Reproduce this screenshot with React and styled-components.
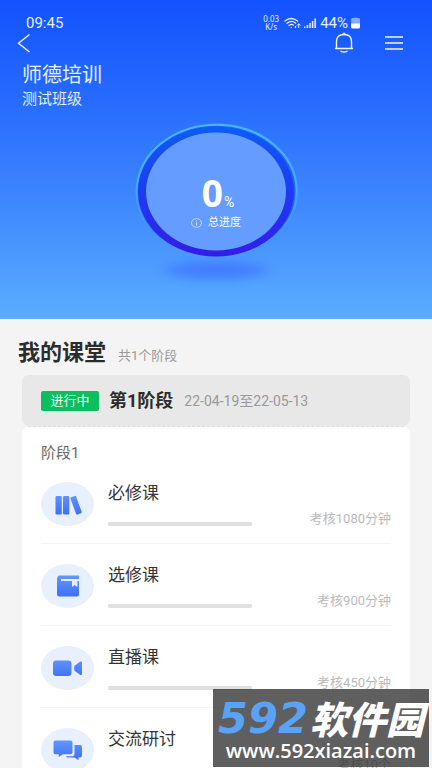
import React from "react";
import styled, { createGlobalStyle, css } from "styled-components";

const GlobalStyle = createGlobalStyle`
  *, *::before, *::after { box-sizing: border-box; }
  body {
    margin: 0;
    background: #f4f4f4;
    color: #333;
    font-family: Roboto, "Noto Sans CJK SC", sans-serif;
  }
  h1, h2, h3, p, ul { margin: 0; padding: 0; font-weight: 400; }
  button { margin: 0; padding: 0; border: 0; background: none; color: inherit; font: inherit; }
  svg { display: block; }
`;

const Screen = styled.div`
  position: relative;
  height: 100vh;
  overflow: hidden;
  background: #f4f4f4;
`;

const Scroller = styled.div`
  height: 100%;
  overflow-y: auto;
  scrollbar-width: none;
`;

const Hero = styled.header`
  padding: 15px 0 28px;
  color: #fff;
  background: linear-gradient(#1352ff 0%, #256aff 30%, #3f89ff 65%, #5aadff 100%);
`;

const StatusBar = styled.div`
  display: flex;
  align-items: center;
  justify-content: space-between;
  height: 16px;
  padding: 0 72px 0 26px;
  font-size: 15px;
  line-height: 16px;
  color: #e4efff;
`;

const StatusIcons = styled.div`
  display: flex;
  align-items: center;
  gap: 3px;
`;

const NetSpeed = styled.span`
  display: flex;
  flex-direction: column;
  margin-right: 2px;
  font-family: "Noto Sans", sans-serif;
  font-size: 8px;
  line-height: 8px;
  text-align: center;
`;

const NavBar = styled.nav`
  display: flex;
  align-items: center;
  justify-content: space-between;
  height: 24px;
  padding: 0 26px 0 14px;
`;

const NavActions = styled.div`
  display: flex;
  gap: 26px;
`;

const IconButton = styled.button`
  display: grid;
  place-items: center;
  width: 24px;
  height: 24px;
  cursor: pointer;
`;

const CourseTitle = styled.h1`
  margin-top: 8px;
  padding-left: 22px;
  font-size: 20px;
  line-height: 24px;
  color: #e6f1ff;
`;

const ClassName = styled.p`
  margin-top: 3px;
  padding-left: 22px;
  font-size: 15px;
  line-height: 18px;
  color: #e0eeff;
`;

const Gauge = styled.section`
  display: grid;
  justify-items: center;
  margin-top: 11px;
  > * { grid-area: 1 / 1; }
`;

const GaugeText = styled.div`
  display: flex;
  flex-direction: column;
  align-items: center;
  padding-top: 56px;
`;

const GaugeValue = styled.div`
  display: flex;
  align-items: baseline;
  gap: 1px;
  height: 40px;
  padding-left: 4px;
  font: 700 37px/36px "Open Sans", sans-serif;
  small { font-size: 14px; font-weight: 400; font-family: Roboto, sans-serif; }
`;

const GaugeLabel = styled.div`
  display: flex;
  align-items: center;
  gap: 6px;
  font-size: 11px;
  line-height: 16px;
`;

const Section = styled.main`
  padding: 20px 22px 0;
`;

const SectionHead = styled.div`
  display: flex;
  align-items: baseline;
  gap: 12px;
  margin-left: -4px;
  h2 { font-size: 22px; line-height: 28px; font-weight: 700; color: #2c2c2c; }
  span { font-size: 13px; color: #999; }
`;

const StageBar = styled.div`
  display: flex;
  align-items: center;
  height: 51px;
  margin-top: 8px;
  padding: 0 19px;
  border-radius: 7px;
  background: #e8e8e8;
`;

const StatusTag = styled.span`
  width: 58px;
  border-radius: 2px;
  background: #0bbf5f;
  color: #e9fff2;
  font-size: 13px;
  line-height: 20px;
  text-align: center;
`;

const StageName = styled.h3`
  margin-left: 10px;
  font-size: 18px;
  font-weight: 700;
  line-height: 24px;
  color: #2c2c2c;
`;

const StageDates = styled.span`
  margin-left: 11px;
  font-size: 14px;
  line-height: 20px;
  color: #999;
`;

const Perforation = styled.div`
  margin: 0 6px;
  border-top: 1px dashed #dedede;
`;

const Card = styled.section`
  padding: 17px 19px 0;
  border-radius: 6px;
  background: #fff;
`;

const CardTitle = styled.h3`
  font-size: 15px;
  line-height: 18px;
  color: #666;
`;

const TaskList = styled.ul`
  list-style: none;
`;

const TaskRow = styled.li`
  display: grid;
  grid-template-columns: 53px 1fr auto;
  column-gap: 14px;
  height: 82px;
  padding-top: 20px;
  border-bottom: 1px solid #f4f4f4;
`;

const TaskIcon = styled.div`
  display: grid;
  place-items: center;
  width: 53px;
  height: 44px;
  border-radius: 50%;
  background: #e8effd;
`;

const TaskBody = styled.div`
  max-width: 144px;
`;

const TaskName = styled.h3`
  font-size: 17px;
  line-height: 22px;
  color: #333;
`;

const track = css`
  border: 0;
  border-radius: 2px;
  background: #e0e0e0;
`;

const TaskProgress = styled.progress`
  display: block;
  width: 100%;
  height: 4px;
  margin-top: 18px;
  appearance: none;
  ${track}
  &::-webkit-progress-bar { ${track} }
  &::-webkit-progress-value { border-radius: 2px; background: #3f74fb; }
`;

const TaskGoal = styled.span`
  align-self: start;
  margin-top: 28px;
  font-size: 13px;
  line-height: 18px;
  color: #bbb;
`;

const Watermark = styled.aside`
  position: absolute;
  right: 3px;
  bottom: 1px;
  display: flex;
  flex-direction: column;
  align-items: center;
  padding: 8px 0 5px;
  width: 216px;
  background: rgba(41, 41, 41, 0.75);
  color: #fff;
`;

const Brand = styled.div`
  display: flex;
  align-items: center;
  gap: 2px;
  height: 42px;
  font: italic 900 38px/42px "Noto Sans CJK SC", sans-serif;
  b { font: italic 700 43px/42px "DejaVu Sans", sans-serif; color: #5aa2f6; }
`;

const Site = styled.div`
  font: 600 20px/23px "Open Sans", sans-serif;
`;

const WifiIcon = () => (
  <svg width="17" height="12" viewBox="0 0 17 12" fill="none" stroke="#e4efff" strokeWidth="1.3" strokeLinecap="round" aria-hidden="true">
    <path d="M1 4Q7 -1 13.500 4M3 6.300Q7.300 2.700 11.500 6M5 8.500Q7.300 6.600 9.300 8" />
    <path d="M7.300 10.300h.1M11.500 9.500v1" />
    <path d="M14.700 10.500V7M13.300 8.300l1.400-1.500 1.400 1.500" strokeWidth="1" />
  </svg>
);

const SignalIcon = () => (
  <svg width="13" height="12" viewBox="0 0 13 12" fill="#e4efff" aria-hidden="true">
    <path d="M0 9.500h1.500V11H0zM2.600 8h1.600v3H2.600zM5.200 6h1.600v5H5.200zM7.800 4h1.600v7H7.800zM10.400 1.500H12V11h-1.600z" />
  </svg>
);

const BatteryIcon = () => (
  <svg width="9" height="12" viewBox="0 0 9 12" aria-hidden="true">
    <path d="M2.500 1Q4.500 0 6.500 1h1Q9 1.200 9 2.500V7H0V2.500Q0 1.200 1.500 1z" fill="#82abff" />
    <path d="M0 6.500h9V10q0 1.500-1.500 1.500h-6Q0 11.500 0 10z" fill="#fff" />
  </svg>
);

const BackIcon = () => (
  <svg width="20" height="20" viewBox="0 0 20 20" fill="none" stroke="#eef5ff" strokeWidth="1.400" aria-hidden="true">
    <path d="M13.500 1.500 2.500 10.300 13.500 19" />
  </svg>
);

const BellIcon = () => (
  <svg width="20" height="22" viewBox="0 0 20 22" fill="none" stroke="#eef5ff" strokeWidth="1.400" strokeLinecap="round" strokeLinejoin="round" aria-hidden="true">
    <path d="M1.500 16.500h17M2.500 16.300V9.500C2.500 5 5.500 2.500 10 2.500s7.500 2.500 7.500 7v6.800M9.300 1.500h1.400M7 19.300q3 1.500 6 0" />
  </svg>
);

const MenuIcon = () => (
  <svg width="18" height="16" viewBox="0 0 18 16" stroke="#eef5ff" strokeWidth="1.500" aria-hidden="true">
    <path d="M0 2h18M0 8h18M0 14h18" />
  </svg>
);

const InfoIcon = () => (
  <svg width="11" height="10" viewBox="0 0 11 10" fill="none" stroke="#d2e3ff" aria-hidden="true">
    <ellipse cx="5.500" cy="5" rx="5" ry="4.400" strokeWidth=".8" />
    <path d="M5.500 4.300v3.200M5.500 2.500v.8" />
  </svg>
);

const GaugeRing = () => (
  <svg width="172" height="172" viewBox="0 0 172 172" fill="none" aria-hidden="true">
    <defs>
      <linearGradient id="ring" x1="0" y1="0" x2="0" y2="1">
        <stop offset="0" stopColor="#0d5cf4" />
        <stop offset=".5" stopColor="#1d3bf3" />
        <stop offset="1" stopColor="#351be8" />
      </linearGradient>
      <linearGradient id="rim" x1="0" y1="0" x2="0" y2="1">
        <stop offset="0" stopColor="#46b6ff" />
        <stop offset=".55" stopColor="#46a9ff" />
        <stop offset="1" stopColor="#46a0ff" stopOpacity=".3" />
      </linearGradient>
      <filter id="soft" x="-40%" y="-150%" width="180%" height="400%" colorInterpolationFilters="sRGB">
        <feGaussianBlur stdDeviation="8 5" />
      </filter>
    </defs>
    <ellipse cx="86" cy="151" rx="50" ry="9" fill="#3f76ff" opacity=".8" filter="url(#soft)" />
    <ellipse cx="86" cy="71" rx="80" ry="66" fill="#2365f8" />
    <path d="M20 109A80 66.500 0 1 1 148 115" stroke="url(#rim)" strokeWidth="2.200" strokeLinecap="round" />
    <ellipse cx="86" cy="72.500" rx="78" ry="65" fill="url(#ring)" />
    <ellipse cx="86" cy="72.500" rx="70" ry="59" fill="#659cff" />
  </svg>
);

const Glyph = ({ id, children }) => (
  <svg width="30" height="24" viewBox="0 0 30 24" fill={`url(#${id})`} aria-hidden="true">
    <defs>
      <linearGradient id={id} gradientUnits="userSpaceOnUse" x1="0" y1="3" x2="0" y2="23">
        <stop offset="0" stopColor="#6095ff" />
        <stop offset="1" stopColor="#3e6ef2" />
      </linearGradient>
    </defs>
    {children}
  </svg>
);

const glyphs = {
  books: (
    <Glyph id="books">
      <rect x="2.500" y="4" width="6.300" height="18.500" rx="1.200" />
      <rect x="10" y="4" width="6.300" height="18.500" rx="1.200" />
      <rect x="20" y="4" width="6" height="18.500" rx="1.200" transform="rotate(-20 23 13)" />
    </Glyph>
  ),
  album: (
    <Glyph id="album">
      <path d="M7 1.500H26V5H8v2h11v6l2.700-2 2.700 2V7H26v13.500q0 2-2 2H6.500q-2.500 0-2.500-2.500V5q0-3.500 3-3.500z" />
    </Glyph>
  ),
  camera: (
    <Glyph id="camera">
      <rect x="0" y="4.500" width="18.500" height="15.500" rx="3.200" />
      <path d="M21.500 9.800 27 5.800q2-1 2 1v11q0 2-2 1l-5.500-4q-1-2.500 0-5z" />
    </Glyph>
  ),
  chat: (
    <Glyph id="chat">
      <path d="M2.500 2.500h15q2 0 2 2v9.800q0 2-2 2H10L5.800 19v-2.700H2.500q-2 0-2-2V4.500q0-2 2-2z" />
      <path d="M21.500 7H27q2 0 2 2v8.500q0 2-2 2h-1.500v2.800l-4-2.800H14l-1-1.300h6.500q2 0 2-2z" />
    </Glyph>
  ),
};

const tasks = [
  { name: "必修课", icon: "books", goal: "考核1080分钟" },
  { name: "选修课", icon: "album", goal: "考核900分钟" },
  { name: "直播课", icon: "camera", goal: "考核450分钟" },
  { name: "交流研讨", icon: "chat", goal: "考核10个" },
];

export default function App() {
  return (
    <Screen>
      <GlobalStyle />
      <Scroller>
        <Hero>
          <StatusBar>
            <span>09:45</span>
            <StatusIcons>
              <NetSpeed><span>0.03</span><span>K/s</span></NetSpeed>
              <WifiIcon />
              <SignalIcon />
              <span>44%</span>
              <BatteryIcon />
            </StatusIcons>
          </StatusBar>
          <NavBar>
            <IconButton type="button" aria-label="返回"><BackIcon /></IconButton>
            <NavActions>
              <IconButton type="button" aria-label="通知"><BellIcon /></IconButton>
              <IconButton type="button" aria-label="菜单"><MenuIcon /></IconButton>
            </NavActions>
          </NavBar>
          <CourseTitle>师德培训</CourseTitle>
          <ClassName>测试班级</ClassName>
          <Gauge>
            <GaugeRing />
            <GaugeText>
              <GaugeValue>0<small>%</small></GaugeValue>
              <GaugeLabel><InfoIcon />总进度</GaugeLabel>
            </GaugeText>
          </Gauge>
        </Hero>
        <Section>
          <SectionHead>
            <h2>我的课堂</h2>
            <span>共1个阶段</span>
          </SectionHead>
          <StageBar>
            <StatusTag>进行中</StatusTag>
            <StageName>第1阶段</StageName>
            <StageDates>22-04-19至22-05-13</StageDates>
          </StageBar>
          <Perforation />
          <Card>
            <CardTitle>阶段1</CardTitle>
            <TaskList>
              {tasks.map((task) => (
                <TaskRow key={task.name}>
                  <TaskIcon>{glyphs[task.icon]}</TaskIcon>
                  <TaskBody>
                    <TaskName>{task.name}</TaskName>
                    <TaskProgress value={0} max={100} aria-label={task.name} />
                  </TaskBody>
                  <TaskGoal>{task.goal}</TaskGoal>
                </TaskRow>
              ))}
            </TaskList>
          </Card>
        </Section>
      </Scroller>
      <Watermark>
        <Brand><b>592</b>软件园</Brand>
        <Site>www.592xiazai.com</Site>
      </Watermark>
    </Screen>
  );
}
